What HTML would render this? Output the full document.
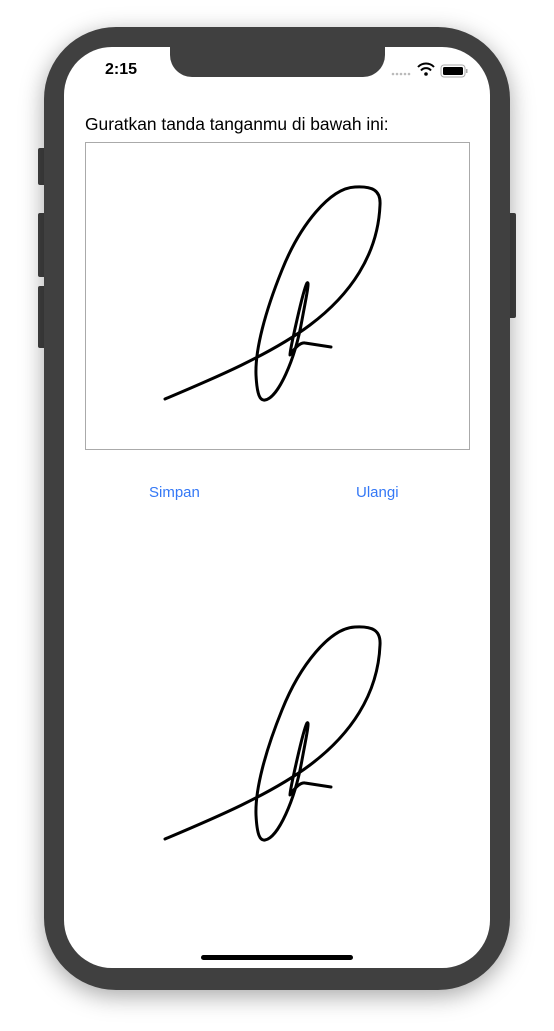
<!DOCTYPE html>
<html><head><meta charset="utf-8"><style>
html,body{margin:0;padding:0;background:#fff;}
body{width:554px;height:1031px;position:relative;overflow:hidden;font-family:"Liberation Sans",sans-serif;}
.phone{position:absolute;left:44px;top:27px;width:466px;height:963px;border-radius:72px;background:#404040;box-shadow:0 6px 24px rgba(0,0,0,0.35);}
.screen{position:absolute;left:64px;top:47px;width:426px;height:921px;border-radius:48px;background:#fff;overflow:hidden;}
.notch{position:absolute;left:170px;top:40px;width:215px;height:37px;background:#404040;border-radius:0 0 22px 22px;}
.btn{position:absolute;background:#404040;border-radius:2px;}
.time{position:absolute;left:105px;top:61px;font-size:16px;font-weight:bold;color:#000;}
.label{position:absolute;left:85px;top:114px;font-size:17.4px;color:#000;}
.box{position:absolute;left:85px;top:142px;width:383px;height:306px;border:1px solid #aaa;}
.b{position:absolute;top:484px;font-size:15px;color:#3478f6;}
.home{position:absolute;left:201px;top:955px;width:152px;height:5px;border-radius:3px;background:#000;}
</style></head><body>
<div class="btn" style="left:38px;top:148px;width:8px;height:37px"></div>
<div class="btn" style="left:38px;top:213px;width:8px;height:64px"></div>
<div class="btn" style="left:38px;top:286px;width:8px;height:62px"></div>
<div class="btn" style="left:508px;top:213px;width:8px;height:105px"></div>
<div class="phone"></div>
<div class="screen"></div>
<div class="notch"></div>
<div class="time">2:15</div>
<svg style="position:absolute;left:0;top:0" width="554" height="1031">
<g fill="#bbb"><circle cx="393" cy="74" r="1.3"/><circle cx="397" cy="74" r="1.3"/><circle cx="401" cy="74" r="1.3"/><circle cx="405" cy="74" r="1.3"/><circle cx="409" cy="74" r="1.3"/></g>
<path d="M418,67 A11,11 0 0 1 434,67" stroke="#000" stroke-width="2" fill="none"/>
<path d="M421,70.5 A6.5,6.5 0 0 1 431,70.5" stroke="#000" stroke-width="2" fill="none"/>
<circle cx="426" cy="74" r="1.8" fill="#000"/>
<rect x="441" y="65" width="24" height="12" rx="3" fill="none" stroke="#aaa" stroke-width="1"/>
<rect x="443" y="67" width="20" height="8" rx="1.5" fill="#000"/>
<rect x="466" y="69" width="1.5" height="4" fill="#aaa"/>
<defs><path id="sig" d="M165,399 C210,380 270,355 310,325 C350,295 378,255 380,205 C381,190 372,186 355,187 C330,188 300,225 282,270 C265,312 255,350 256,375 C257,395 260,401 265,400 C278,398 295,360 302,320 C306,298 310,280 307,283 C303,290 290,350 290,355 C293,350 300,342 305,343 L331,347"/></defs>
<use href="#sig" stroke="#000" stroke-width="3" fill="none" stroke-linecap="round" stroke-linejoin="round"/>
<use href="#sig" transform="translate(0,440)" stroke="#000" stroke-width="3" fill="none" stroke-linecap="round" stroke-linejoin="round"/>
</svg>
<div class="label">Guratkan tanda tanganmu di bawah ini:</div>
<div class="box"></div>
<div class="b" style="left:149px">Simpan</div>
<div class="b" style="left:356px">Ulangi</div>
<div class="home"></div>
</body></html>
